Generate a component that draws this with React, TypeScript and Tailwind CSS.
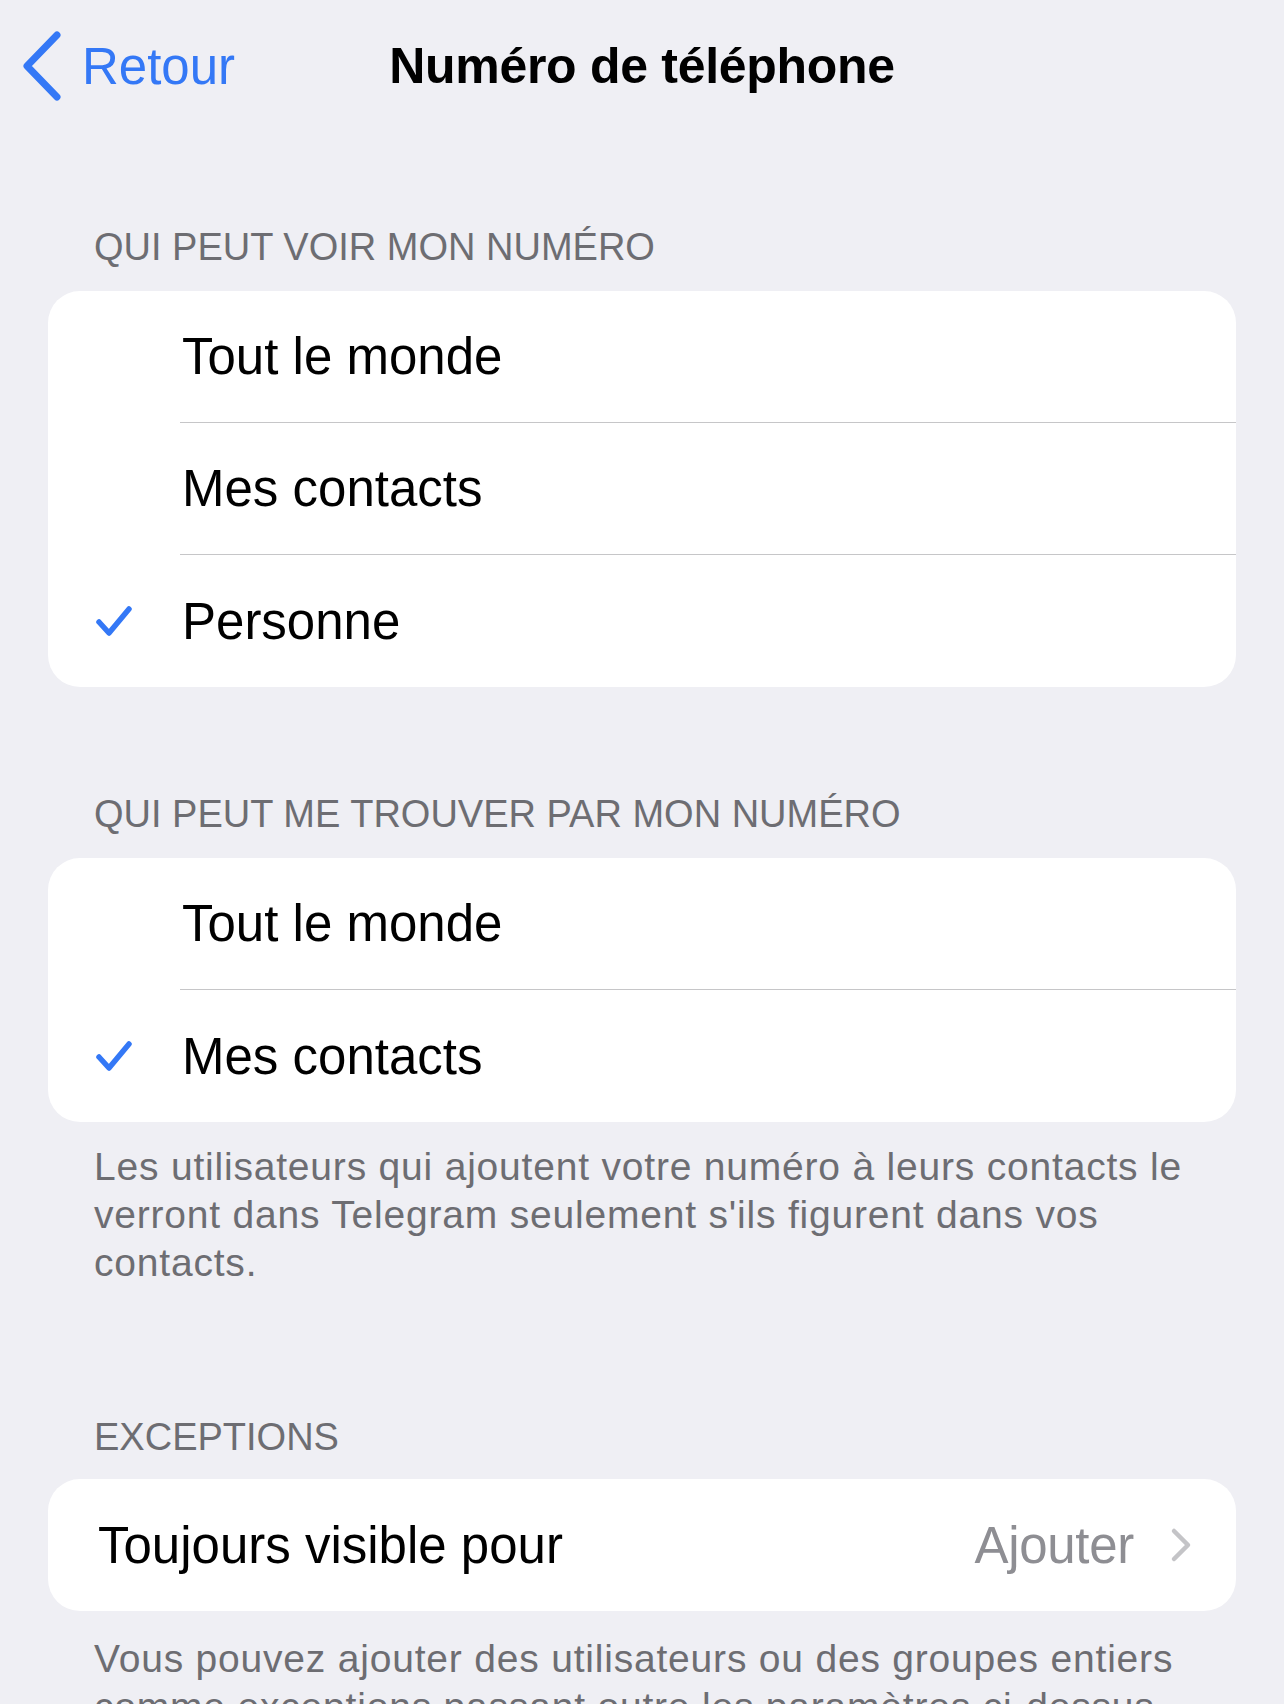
const font = "font-['Liberation_Sans',Arial,sans-serif]";

function Check() {
  return (
    <svg width="38" height="32" viewBox="0 0 38 32" className="block">
      <polyline
        points="4,17 14,28 34,4"
        fill="none"
        stroke="#3478f6"
        strokeWidth="5.5"
        strokeLinecap="round"
        strokeLinejoin="round"
      />
    </svg>
  );
}

function OptionRow({ label, checked, last }: { label: string; checked?: boolean; last?: boolean }) {
  return (
    <div className="flex h-[132px] items-stretch">
      <div className="flex w-[132px] shrink-0 items-center pl-[47px]">{checked && <Check />}</div>
      <div
        className={`flex flex-1 items-center pl-[2px] ${last ? "" : "border-b border-[#c6c6c8]"}`}
      >
        <span className="text-[51px] leading-none text-black">{label}</span>
      </div>
    </div>
  );
}

function SectionHeader({ children, className }: { children: string; className: string }) {
  return (
    <div className={`px-[94px] text-[38px] leading-[38px] text-[#6d6d72] ${className}`}>{children}</div>
  );
}

export default function App() {
  return (
    <div className={`min-h-[1704px] w-[1284px] overflow-hidden bg-[#efeff4] ${font}`}>
      {/* nav bar */}
      <div className="grid h-[132px] grid-cols-[1fr_auto_1fr] items-center">
        <div className="flex items-center">
          <svg width="44" height="72" viewBox="0 0 44 72" className="ml-[21px] block">
            <polyline
              points="36,5 6,36 36,67"
              fill="none"
              stroke="#3478f6"
              strokeWidth="7"
              strokeLinecap="round"
              strokeLinejoin="round"
            />
          </svg>
          <span className="ml-[17px] text-[51px] leading-none text-[#3478f6]">Retour</span>
        </div>
        <div className="text-[50px] font-semibold leading-none tracking-[-0.3px] text-black">
          Numéro de téléphone
        </div>
        <div />
      </div>

      <SectionHeader className="mt-[96px]">QUI PEUT VOIR MON NUMÉRO</SectionHeader>
      <div className="mx-[48px] mt-[25px] overflow-hidden rounded-[32px] bg-white">
        <OptionRow label="Tout le monde" />
        <OptionRow label="Mes contacts" />
        <OptionRow label="Personne" checked last />
      </div>

      <SectionHeader className="mt-[108px]">QUI PEUT ME TROUVER PAR MON NUMÉRO</SectionHeader>
      <div className="mx-[48px] mt-[25px] overflow-hidden rounded-[32px] bg-white">
        <OptionRow label="Tout le monde" />
        <OptionRow label="Mes contacts" checked last />
      </div>

      <p className="mt-[21px] whitespace-nowrap px-[94px] text-[39px] leading-[48px] tracking-[0.8px] text-[#6d6d72]">
        Les utilisateurs qui ajoutent votre numéro à leurs contacts le
        <br />
        verront dans Telegram seulement s'ils figurent dans vos
        <br />
        contacts.
      </p>

      <SectionHeader className="mt-[131px]">EXCEPTIONS</SectionHeader>
      <div className="mx-[48px] mt-[23px] flex h-[132px] items-center rounded-[32px] bg-white pl-[50px] pr-[44px]">
        <span className="flex-1 text-[51px] leading-none text-black">Toujours visible pour</span>
        <span className="text-[51px] leading-none tracking-[-0.3px] text-[#8e8e93]">Ajouter</span>
        <svg width="22" height="36" viewBox="0 0 22 36" className="ml-[36px] block">
          <polyline
            points="4,4 18,18 4,32"
            fill="none"
            stroke="#c4c4c7"
            strokeWidth="4.5"
            strokeLinecap="round"
            strokeLinejoin="round"
          />
        </svg>
      </div>

      <p className="mt-[24px] whitespace-nowrap px-[94px] text-[39px] leading-[48px] tracking-[0.8px] text-[#6d6d72]">
        Vous pouvez ajouter des utilisateurs ou des groupes entiers
        <br />
        comme exceptions passant outre les paramètres ci-dessus.
      </p>
    </div>
  );
}
